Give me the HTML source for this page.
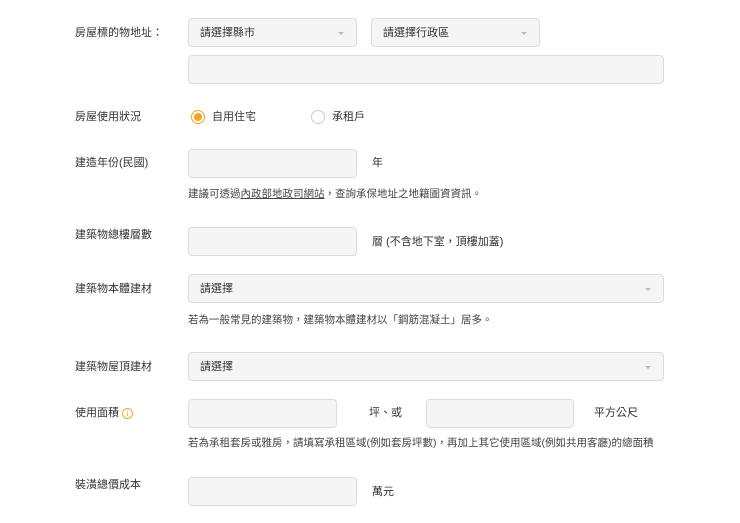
<!DOCTYPE html>
<html><head><meta charset="utf-8"><style>
*{box-sizing:border-box;margin:0;padding:0}
body{width:740px;height:523px;background:#fff;position:relative;overflow:hidden;font-family:"Liberation Sans","Noto Sans CJK TC",sans-serif;font-size:11px;color:#333}
.t{position:absolute;white-space:nowrap;line-height:14px}
.b{position:absolute;background:#f5f5f5;border:1px solid #dcdcdc;border-radius:4px}
.s{padding-left:11px;padding-top:1px;line-height:27px;font-size:11px;color:#333}
.s:after{content:"";position:absolute;right:12px;top:13px;border:3px solid transparent;border-top:3px solid #bbb}
.h{color:#444;font-size:10.5px}
</style></head><body>
<div class="t" style="left:75px;top:26px">房屋標的物地址：</div>
<div class="b s" style="left:188px;top:18px;width:169px;height:29px">請選擇縣市</div>
<div class="b s" style="left:371px;top:18px;width:169px;height:29px">請選擇行政區</div>
<div class="b" style="left:188px;top:55px;width:476px;height:29px"></div>

<div class="t" style="left:75px;top:110px">房屋使用狀況</div>
<div style="position:absolute;left:191px;top:110px;width:14px;height:14px;border-radius:50%;border:1px solid #f5a623;background:#fff"><div style="position:absolute;left:2px;top:2px;width:8px;height:8px;border-radius:50%;background:#f5a623"></div></div>
<div class="t" style="left:212px;top:110px">自用住宅</div>
<div style="position:absolute;left:311px;top:110px;width:14px;height:14px;border-radius:50%;border:1px solid #ccc;background:#fff"></div>
<div class="t" style="left:332px;top:110px">承租戶</div>

<div class="t" style="left:75px;top:156px">建造年份(民國)</div>
<div class="b" style="left:188px;top:149px;width:169px;height:29px"></div>
<div class="t" style="left:372px;top:156px">年</div>
<div class="t h" style="left:188px;top:187px">建議可透過<u>內政部地政司網站</u>，查詢承保地址之地籍圖資資訊。</div>

<div class="t" style="left:75px;top:228px">建築物總樓層數</div>
<div class="b" style="left:188px;top:227px;width:169px;height:29px"></div>
<div class="t" style="left:372px;top:235px">層 (不含地下室，頂樓加蓋)</div>

<div class="t" style="left:75px;top:282px">建築物本體建材</div>
<div class="b s" style="left:188px;top:274px;width:476px;height:29px">請選擇</div>
<div class="t h" style="left:188px;top:313px">若為一般常見的建築物，建築物本體建材以「鋼筋混凝土」居多。</div>

<div class="t" style="left:75px;top:360px">建築物屋頂建材</div>
<div class="b s" style="left:188px;top:352px;width:476px;height:29px">請選擇</div>

<div class="t" style="left:75px;top:406px">使用面積</div>
<div style="position:absolute;left:122px;top:408px;width:11px;height:11px;border-radius:50%;border:1px solid #f5a623;color:#f5a623;font-size:8px;line-height:9px;text-align:center;font-family:'Liberation Serif',serif">i</div>
<div class="b" style="left:188px;top:399px;width:149px;height:29px"></div>
<div class="t" style="left:369px;top:406px">坪、或</div>
<div class="b" style="left:426px;top:399px;width:148px;height:29px"></div>
<div class="t" style="left:594px;top:406px">平方公尺</div>
<div class="t h" style="left:188px;top:436px">若為承租套房或雅房，請填寫承租區域(例如套房坪數)，再加上其它使用區域(例如共用客廳)的總面積</div>

<div class="t" style="left:75px;top:478px">裝潢總價成本</div>
<div class="b" style="left:188px;top:477px;width:169px;height:29px"></div>
<div class="t" style="left:372px;top:485px">萬元</div>
</body></html>
